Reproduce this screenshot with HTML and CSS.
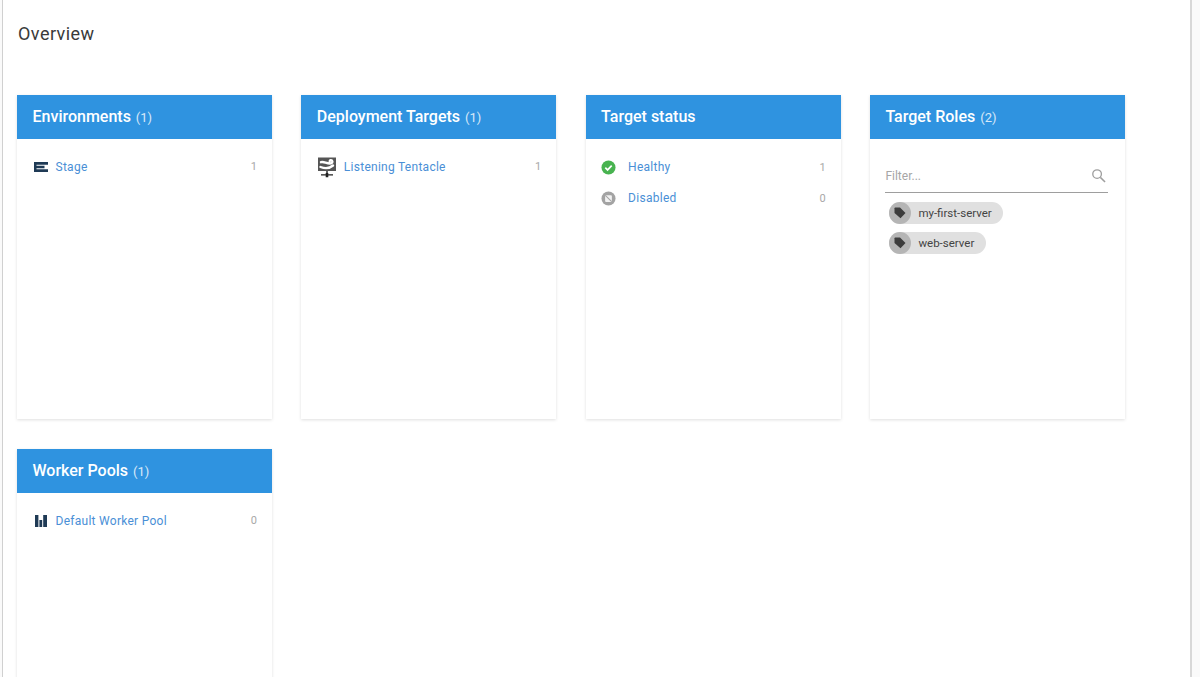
FILE: index.html
```html
<!DOCTYPE html>
<html lang="en">
<head>
<meta charset="utf-8">
<title>Overview</title>
<link rel="stylesheet" href="styles.css">
</head>
<body>
<main class="panel">
  <h1 class="title">Overview</h1>
  <div class="grid">
    <section class="card">
      <h2 class="card-head">Environments <span class="count">(1)</span></h2>
      <div class="card-body">
        <a class="row">
          <svg class="icon" viewBox="0 0 16 12"><path fill="#1f3a55" d="M1 1h14v2.800H1zM1 4.700h10.500v2.600H1zM1 8.200h14V11H1z"/><path fill="#1f3a55" d="M1 1h2.500v10H1z"/></svg>
          <span class="label">Stage</span><span class="num">1</span>
        </a>
      </div>
    </section>
    <section class="card">
      <h2 class="card-head">Deployment Targets <span class="count">(1)</span></h2>
      <div class="card-body">
        <a class="row row-wide">
          <svg class="icon icon-tentacle" viewBox="0 0 20 22"><path fill="#555" d="M1 1.500h18V15H1z"/><path fill="none" stroke="#fff" stroke-width="2.400" stroke-linecap="round" d="M4 6.200c3-1 5 1.300 9 1.300 2.200 0 3-1.300 2-2.800-.8-.8-2-.5-2.300.4M3.500 11c4 1.500 9 1.500 12.500-1.500"/><path fill="#222" d="M9.300 15h1.400v2.500H9.300zM4 18.300h12v1.100H4zM8.700 17h2.600v4.300H8.700z"/></svg>
          <span class="label">Listening Tentacle</span><span class="num">1</span>
        </a>
      </div>
    </section>
    <section class="card">
      <h2 class="card-head">Target status</h2>
      <div class="card-body body-status">
        <a class="row row-status">
          <svg class="icon icon-status" viewBox="0 0 16 16"><circle cx="8" cy="8" r="7.500" fill="#48b350"/><path fill="none" stroke="#fff" stroke-width="1.800" d="M4.600 8.200l2.400 2.400 4.400-4.600"/></svg>
          <span class="label">Healthy</span><span class="num">1</span>
        </a>
        <a class="row row-status">
          <svg class="icon icon-status" viewBox="0 0 16 16"><circle cx="8" cy="8" r="7.500" fill="#a3a3a3"/><rect x="4.400" y="4.400" width="7.200" height="7.200" rx="1" fill="#f2f2f2"/><path stroke="#a3a3a3" stroke-width="1.100" d="M4.600 4.600l6.800 6.800"/></svg>
          <span class="label">Disabled</span><span class="num">0</span>
        </a>
      </div>
    </section>
    <section class="card">
      <h2 class="card-head">Target Roles <span class="count">(2)</span></h2>
      <div class="card-body roles">
        <div class="filter">
          <span class="placeholder">Filter...</span>
          <svg class="search" viewBox="0 0 16 16"><circle cx="6.500" cy="6.500" r="4.600" fill="none" stroke="#9e9e9e" stroke-width="1.400"/><path stroke="#9e9e9e" stroke-width="1.600" d="M10 10l5 5"/></svg>
        </div>
        <div class="chips">
          <span class="chip"><span class="chip-icon"><svg viewBox="0 0 12 12"><path fill="#3d3d3d" d="M.5 1.200C.5.800.8.500 1.200.500H6l5.500 5.500-5 5.200L.5 6z"/></svg></span>my-first-server</span>
          <span class="chip"><span class="chip-icon"><svg viewBox="0 0 12 12"><path fill="#3d3d3d" d="M.5 1.200C.5.800.8.500 1.200.500H6l5.500 5.500-5 5.200L.5 6z"/></svg></span>web-server</span>
        </div>
      </div>
    </section>
    <section class="card">
      <h2 class="card-head">Worker Pools <span class="count">(1)</span></h2>
      <div class="card-body">
        <a class="row">
          <svg class="icon" viewBox="0 0 16 12"><path fill="#1f3a55" d="M2 0h3.400v12H2zM6.400 5h2.800v7H6.400zM10.200 0H14v12h-3.800z"/></svg>
          <span class="label">Default Worker Pool</span><span class="num">0</span>
        </a>
      </div>
    </section>
  </div>
</main>
</body>
</html>
```

FILE: styles.css
```css
html, body {
  margin: 0;
  height: 677px;
  overflow: hidden;
  background: #fafafa;
  font-family: Roboto, "Liberation Sans", sans-serif;
}
.panel {
  box-sizing: border-box;
  width: 1190px;
  height: 677px;
  margin-left: 2px;
  padding: 0 14px;
  background: #fff;
  border-left: 1px solid #d0d0d0;
  border-right: 2px solid #d8d8d8;
  overflow: hidden;
}
.title {
  margin: 0;
  padding: 23.500px 0 0 1px;
  height: 95px;
  box-sizing: border-box;
  font-size: 18px;
  line-height: 20px;
  font-weight: 400;
  letter-spacing: .45px;
  color: #3a3a3a;
}
.grid {
  display: grid;
  grid-template-columns: repeat(4, 255px);
  grid-auto-rows: 324px;
  column-gap: 29.300px;
  row-gap: 30px;
}
.card {
  background: #fff;
  box-shadow: 0 1px 3px rgba(0, 0, 0, .13);
}
.card-head {
  margin: 0;
  height: 44px;
  padding: 0 15.500px;
  background: #2f93e0;
  color: #fff;
  font-size: 16px;
  font-weight: 500;
  line-height: 43px;
}
.count {
  margin-left: 1px;
  font-size: 13px;
  font-weight: 400;
  opacity: .8;
}
.card-body {
  padding: 16px 15.500px 0;
}
.body-status {
  padding-top: 17px;
}
.row {
  display: flex;
  align-items: center;
  height: 23px;
  font-size: 12px;
  color: #4a8fd6;
}
.row-status {
  height: 22px;
  margin-bottom: 10px;
}
.row-status + .row-status {
  margin-top: -1px;
}
.icon {
  width: 16px;
  height: 12px;
  margin-right: 7px;
  flex: none;
}
.icon-tentacle {
  width: 20px;
  height: 22px;
  margin-right: 7px;
}
.icon-status {
  width: 15px;
  height: 15px;
  margin-left: -.500px;
  margin-right: 12.500px;
}
.label {
  flex: 1;
  letter-spacing: .27px;
}
.num {
  margin-right: -.500px;
  color: #a8a8a8;
  font-size: 11px;
}
.roles {
  padding-top: 16px;
  padding-right: 17px;
}
.filter {
  box-sizing: border-box;
  display: flex;
  align-items: center;
  justify-content: space-between;
  height: 38px;
  padding-top: 4px;
  border-bottom: 1px solid #9e9e9e;
}
.placeholder {
  font-size: 12px;
  color: #a6a6a6;
}
.search {
  width: 15px;
  height: 15px;
  margin-right: 2px;
}
.chips {
  display: flex;
  flex-direction: column;
  align-items: flex-start;
  gap: 8px;
  padding: 9px 0 0 4px;
}
.chip {
  display: flex;
  align-items: center;
  height: 22px;
  padding-right: 11.500px;
  border-radius: 11px;
  background: #e0e0e0;
  font-size: 11.500px;
  color: #444;
}
.chip-icon {
  display: flex;
  align-items: center;
  justify-content: center;
  box-sizing: border-box;
  width: 22px;
  height: 22px;
  margin-right: 7px;
  padding: 5px;
  border-radius: 50%;
  background: #b5b5b5;
}
.chip-icon svg {
  width: 12px;
  height: 12px;
}
```
